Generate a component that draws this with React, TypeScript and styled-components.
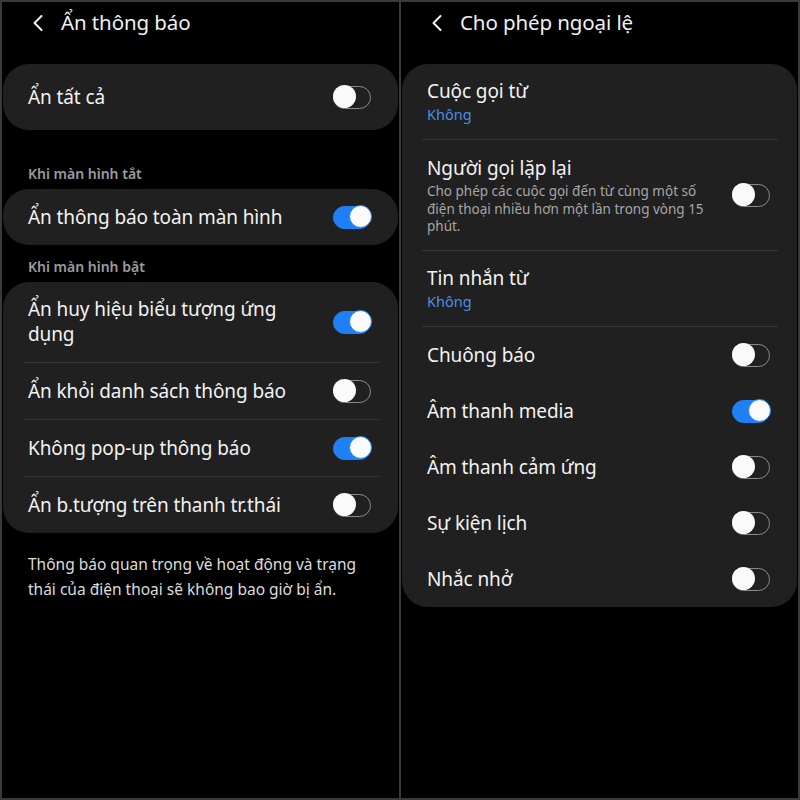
import React from 'react';
import styled, { createGlobalStyle } from 'styled-components';

const GlobalStyle = createGlobalStyle`
  html, body {
    margin: 0;
    padding: 0;
    background: #3a3a3a;
  }
  body {
    font-family: "Noto Sans", "Open Sans", sans-serif;
    -webkit-font-smoothing: antialiased;
  }
`

const Frame = styled.div`
  width: 800px;
  height: 800px;
  box-sizing: border-box;
  padding: 2px;
  display: grid;
  grid-template-columns: 1fr 1fr;
  gap: 2px;
  background: #3a3a3a;
`

const Screen = styled.div`
  background: #000;
  padding: 0 1px 0 1px;
  display: flex;
  flex-direction: column;
  overflow: hidden;
`

const Header = styled.div`
  height: 62px;
  display: flex;
  align-items: flex-start;
  padding: 7px 0 0 28px;
  box-sizing: border-box;
  gap: 16px;
  color: #f0f0f0;
`

const BackIcon = styled.svg`
  width: 14px;
  height: 18px;
  margin-top: 5px;
  flex: none;
`

const Title = styled.div`
  font-size: 20.5px;
  line-height: 26px;
  color: #f0f0f0;
  letter-spacing: -0.1px;
`

const Card = styled.div<{ $pad?: number }>`
  background: #202020;
  border-radius: 26px;
  padding: ${p => p.$pad ?? 0}px 0;
`

const SectionLabel = styled.div<{ $top?: number }>`
  font-size: 14px;
  font-weight: 600;
  color: #9c9c9c;
  padding: ${p => p.$top ?? 34}px 0 5px 25px;
  line-height: 20px;
`

const Row = styled.div<{ $minHeight?: number }>`
  display: flex;
  align-items: center;
  gap: 18px;
  min-height: ${p => p.$minHeight ?? 56}px;
  padding: 0 27px 0 25px;
  box-sizing: border-box;
`

const RowText = styled.div<{ $padTop?: number }>`
  flex: 1;
  min-width: 0;
  padding-top: ${p => p.$padTop ?? 0}px;
`

const RowTitle = styled.div<{ $wrap?: number }>`
  font-size: 19px;
  line-height: 25px;
  color: #f2f2f2;
  letter-spacing: -0.1px;
  max-width: ${p => (p.$wrap ? `${p.$wrap}px` : 'none')};
`

const RowValue = styled.div`
  font-size: 14.5px;
  line-height: 20px;
  color: #4b8fe2;
`

const RowDesc = styled.div`
  font-size: 13.5px;
  line-height: 17.5px;
  color: #a6a6a6;
  margin-top: 2px;
  max-width: 292px;
`

const Divider = styled.div`
  height: 1px;
  background: #363636;
  margin: 0 19px 0 20px;
`

const Track = styled.div<{ $on: boolean }>`
  position: relative;
  flex: none;
  width: 38px;
  height: 23px;
  box-sizing: border-box;
  border-radius: 12px;
  border: 1.5px solid ${p => (p.$on ? '#1f80f6' : '#8a8a8a')};
  background: ${p => (p.$on ? '#1f80f6' : 'transparent')};
`

const Knob = styled.div<{ $on: boolean }>`
  position: absolute;
  top: -1.5px;
  ${p => (p.$on ? 'right: -1.5px;' : 'left: -1.5px;')}
  width: 23px;
  height: 23px;
  border-radius: 50%;
  background: #fafafa;
  box-sizing: border-box;
  border: ${p => (p.$on ? '1px solid #1f80f6' : 'none')};
`

const Footer = styled.div`
  font-size: 15.5px;
  line-height: 25px;
  color: #dcdcdc;
  padding: 19px 28px 0 25px;
`

function Toggle({ on }: { on: boolean }) {
  return (
    <Track $on={on}>
      <Knob $on={on} />
    </Track>
  );
}

function Back() {
  return (
    <BackIcon viewBox="0 0 14 18">
      <path d="M10.5 2 L3.5 9 L10.5 16" fill="none" stroke="#f0f0f0" strokeWidth="2" strokeLinecap="round" strokeLinejoin="round" />
    </BackIcon>
  );
}

const hideOnRows = [
  { label: 'Ẩn khỏi danh sách thông báo', on: false },
  { label: 'Không pop-up thông báo', on: true },
  { label: 'Ẩn b.tượng trên thanh tr.thái', on: false },
];

const exceptionToggles = [
  { label: 'Chuông báo', on: false },
  { label: 'Âm thanh media', on: true },
  { label: 'Âm thanh cảm ứng', on: false },
  { label: 'Sự kiện lịch', on: false },
  { label: 'Nhắc nhở', on: false },
];

function HideNotifications() {
  return (
    <Screen>
      <Header>
        <Back />
        <Title>Ẩn thông báo</Title>
      </Header>
      <Card $pad={5}>
        <Row>
          <RowText><RowTitle>Ẩn tất cả</RowTitle></RowText>
          <Toggle on={false} />
        </Row>
      </Card>

      <SectionLabel>Khi màn hình tắt</SectionLabel>
      <Card>
        <Row>
          <RowText><RowTitle>Ẩn thông báo toàn màn hình</RowTitle></RowText>
          <Toggle on />
        </Row>
      </Card>

      <SectionLabel $top={12}>Khi màn hình bật</SectionLabel>
      <Card>
        <Row $minHeight={80}>
          <RowText><RowTitle $wrap={280}>Ẩn huy hiệu biểu tượng ứng dụng</RowTitle></RowText>
          <Toggle on />
        </Row>
        {hideOnRows.map(r => (
          <React.Fragment key={r.label}>
            <Divider />
            <Row>
              <RowText><RowTitle>{r.label}</RowTitle></RowText>
              <Toggle on={r.on} />
            </Row>
          </React.Fragment>
        ))}
      </Card>

      <Footer>
        Thông báo quan trọng về hoạt động và trạng thái của điện thoại sẽ không bao giờ bị ẩn.
      </Footer>
    </Screen>
  );
}

function Exceptions() {
  return (
    <Screen>
      <Header>
        <Back />
        <Title>Cho phép ngoại lệ</Title>
      </Header>
      <Card>
        <Row $minHeight={75}>
          <RowText>
            <RowTitle>Cuộc gọi từ</RowTitle>
            <RowValue>Không</RowValue>
          </RowText>
        </Row>
        <Divider />
        <Row $minHeight={110}>
          <RowText $padTop={2}>
            <RowTitle>Người gọi lặp lại</RowTitle>
            <RowDesc>Cho phép các cuộc gọi đến từ cùng một số điện thoại nhiều hơn một lần trong vòng 15 phút.</RowDesc>
          </RowText>
          <Toggle on={false} />
        </Row>
        <Divider />
        <Row $minHeight={75}>
          <RowText>
            <RowTitle>Tin nhắn từ</RowTitle>
            <RowValue>Không</RowValue>
          </RowText>
        </Row>
        <Divider />
        {exceptionToggles.map(r => (
          <Row key={r.label}>
            <RowText><RowTitle>{r.label}</RowTitle></RowText>
            <Toggle on={r.on} />
          </Row>
        ))}
      </Card>
    </Screen>
  );
}

export default function App() {
  return (
    <>
      <GlobalStyle />
      <Frame>
        <HideNotifications />
        <Exceptions />
      </Frame>
    </>
  );
}
